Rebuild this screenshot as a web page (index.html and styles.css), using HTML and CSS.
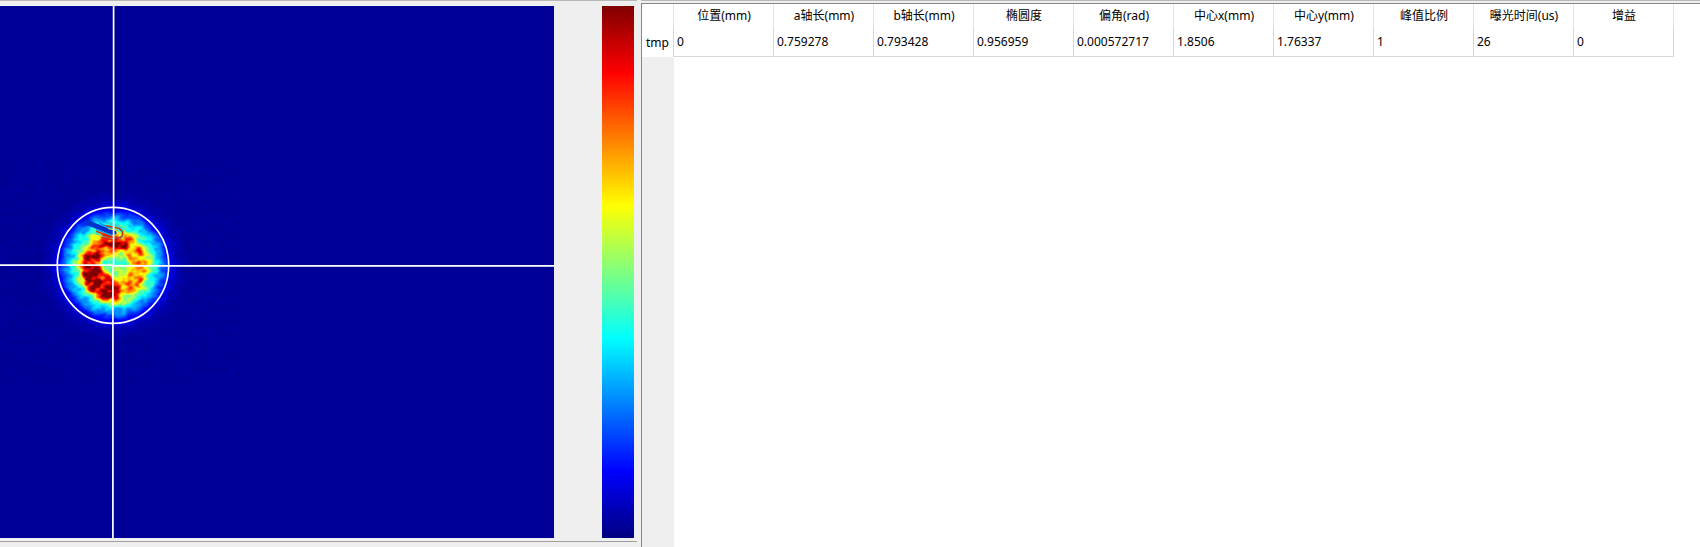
FILE: index.html
```html
<!DOCTYPE html>
<html lang="zh-CN">
<head>
<meta charset="utf-8">
<title>光斑分析</title>
<link rel="stylesheet" href="styles.css">
</head>
<body>
<main class="app">
  <section class="viewer">
    <div class="view-row">
      <svg class="beam" width="554" height="532" viewBox="0 6 554 532">
        <defs>
          <!-- grey intensity with speckle, mapped through the jet palette -->
          <filter id="jet" filterUnits="userSpaceOnUse" x="0" y="160" width="240" height="220" color-interpolation-filters="sRGB">
            <feTurbulence type="fractalNoise" baseFrequency="0.11 0.15" numOctaves="2" seed="8"/>
            <feColorMatrix values="1.8 0 0 0 -0.4  1.8 0 0 0 -0.4  1.8 0 0 0 -0.4  0 0 0 0 1" result="n"/>
            <feComposite in="SourceGraphic" in2="n" operator="arithmetic" k1="0.46" k2="0.77" k3="0" k4="0"/>
            <feComponentTransfer>
              <feFuncR type="table" tableValues="0 0 0 0 .5 1 1 1 .5"/>
              <feFuncG type="table" tableValues="0 0 .5 1 1 1 .5 0 0"/>
              <feFuncB type="table" tableValues=".5 1 1 1 .5 0 0 0 0"/>
            </feComponentTransfer>
          </filter>
          <filter id="soft" x="-50%" y="-50%" width="200%" height="200%" color-interpolation-filters="sRGB"><feGaussianBlur stdDeviation="7"/></filter>
          <radialGradient id="spot" gradientUnits="userSpaceOnUse" cx="222" cy="226" r="225">
            <stop offset="0" stop-color="#858585"/>
            <stop offset=".14" stop-color="#8e8e8e"/>
            <stop offset=".28" stop-color="#adadad"/>
            <stop offset=".4" stop-color="#a4a4a4"/>
            <stop offset=".49" stop-color="#808080"/>
            <stop offset=".57" stop-color="#5e5e5e"/>
            <stop offset=".66" stop-color="#3a3a3a"/>
            <stop offset=".75" stop-color="#1a1a1a"/>
            <stop offset=".87" stop-color="#0b0b0b"/>
            <stop offset="1" stop-color="#060606"/>
          </radialGradient>
        </defs>
        <rect class="field" x="0" y="6" width="554" height="532"/>
        <g filter="url(#jet)">
          <g transform="translate(40 190) scale(.33333)">
            <rect x="-120" y="-90" width="720" height="660" fill="#060606"/>
            <circle cx="222" cy="226" r="225" fill="url(#spot)"/>
            <g filter="url(#soft)">
              <path fill="#e4e4e4" d="M205 145L270 145L268 180L215 182L190 195L180 222L185 242L216 262L234 288L236 340L205 330L165 322L138 285L122 230L145 180L175 155Z"/>
              <path fill="#fff" d="M125 222L178 226L180 258L210 274L240 288L238 325L205 318L182 296L140 284Z"/>
              <ellipse fill="#fff" cx="245" cy="162" rx="26" ry="15"/>
              <path fill="none" stroke="#c2c2c2" stroke-width="18" d="M280 175Q306 185 303 225Q310 255 290 285Q270 305 245 300"/>
              <ellipse fill="#7c7c7c" cx="228" cy="222" rx="40" ry="26"/>
            </g>
          </g>
        </g>
        <g class="probe" transform="translate(40 190) scale(.33333)">
          <path class="probe-glow" d="M165 88L235 108Q258 124 246 140Q230 152 170 130"/>
          <path class="probe-dark" d="M140 97L222 129"/>
          <path class="probe-cyan" d="M180 100L231 122M170 118L215 137"/>
          <path class="probe-red" d="M200 107L236 115Q252 124 246 138Q240 147 222 143L170 124M185 143L225 151M188 134L213 142"/>
          <path class="probe-yellow" d="M205 116L228 120Q240 127 234 134L218 136M252 119Q259 132 248 145"/>
        </g>
        <ellipse class="mark" cx="113" cy="265.3" rx="55.7" ry="58"/>
        <path class="mark" d="M113.6 6V265M112.9 265V538M0 265.1H113M113 265.8H554"/>
      </svg>
      <div class="colorbar"></div>
    </div>
  </section>
  <section class="results">
    <div class="panel">
      <table class="grid">
        <thead>
          <tr><th class="corner"></th><th>位置(mm)</th><th>a轴长(mm)</th><th>b轴长(mm)</th><th>椭圆度</th><th>偏角(rad)</th><th>中心x(mm)</th><th>中心y(mm)</th><th>峰值比例</th><th>曝光时间(us)</th><th>增益</th></tr>
        </thead>
        <tbody>
          <tr><th class="rowhead">tmp</th><td>0</td><td>0.759278</td><td>0.793428</td><td>0.956959</td><td>0.000572717</td><td>1.8506</td><td>1.76337</td><td>1</td><td>26</td><td>0</td></tr>
        </tbody>
      </table>
      <div class="gutter"></div>
    </div>
  </section>
</main>
</body>
</html>
```
FILE: styles.css
```css
* { box-sizing: border-box; }
body {
  margin: 0;
  overflow: hidden;
  background: #efefef;
  color: #000;
  font: 12px/16px "Noto Sans", "Noto Sans CJK SC", sans-serif;
}
.app {
  display: flex;
  justify-content: space-between;
  height: 547px;
}
.viewer {
  width: 637px;
  height: 542px;
  padding-top: 5px;
  border-top: 1px solid #b8b8b8;
  border-bottom: 1px solid #a0a0a0;
}
.view-row { display: flex; gap: 48px; }
.beam { display: block; }
.field { fill: #000096; }
.mark { fill: none; stroke: #fff; stroke-width: 1.7; }
.probe path { fill: none; stroke-linecap: round; }
.probe .probe-glow { stroke: #20a8f0; stroke-width: 8; opacity: .5; }
.probe .probe-dark { stroke: #0030d0; stroke-width: 15; }
.probe .probe-cyan { stroke: #0090ff; stroke-width: 4; }
.probe .probe-red { stroke: #d82800; stroke-width: 3.8; }
.probe .probe-yellow { stroke: #e8e020; stroke-width: 3; }
.colorbar {
  width: 32px;
  height: 532px;
  background: linear-gradient(#800000, #f00 12.5%, #ff0 37.5%, #0ff 62.5%, #00f 87.5%, #000080);
}
.results {
  display: flex;
  width: 1059px;
  padding-top: 2px;
  border-top: 1px solid #b8b8b8;
}
.panel {
  display: flex;
  flex: 1;
  flex-direction: column;
  border-top: 1px solid #828790;
  border-left: 1px solid #828790;
  background: #fff;
}
.grid {
  width: 1032px;
  table-layout: fixed;
  border-collapse: separate;
  border-spacing: 0;
}
.grid th, .grid td {
  width: 100px;
  padding: 0;
  font-weight: 400;
  border-right: 1px solid #d8d8d8;
}
.grid thead th { height: 23px; padding-left: 1px; border-right-color: #e5e5e5; }
.grid tbody th, .grid tbody td { height: 30px; }
.grid tbody th { padding-top: 2px; }
.grid td { padding: 0 0 0 3px; border-bottom: 1px solid #d8d8d8; }
.grid .corner, .grid .rowhead { width: 32px; }
.gutter {
  flex: 1;
  width: 32px;
  background: #efefef;
}
```
